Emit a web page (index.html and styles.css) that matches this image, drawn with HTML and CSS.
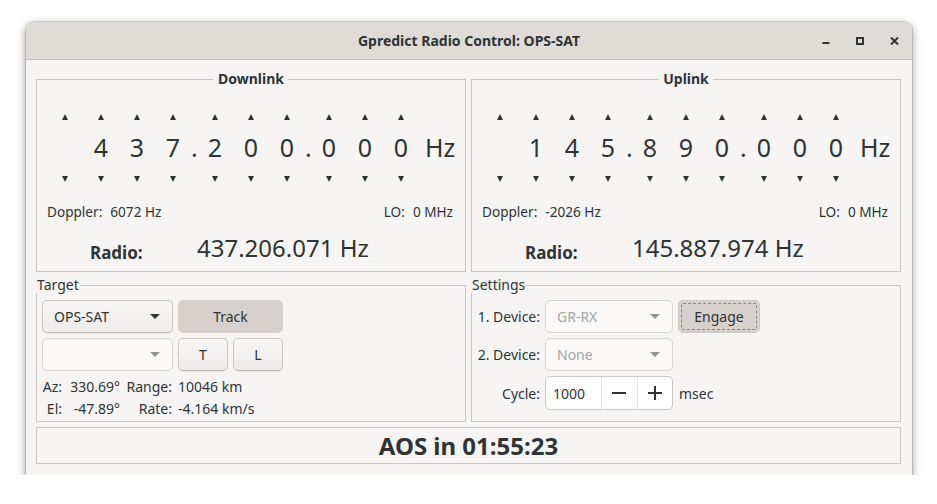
FILE: index.html
```html
<!DOCTYPE html>
<html>
<head>
<meta charset="utf-8">
<title>Gpredict Radio Control: OPS-SAT</title>
<link rel="stylesheet" href="styles.css">
</head>
<body>
<div class="window">
  <div class="titlebar">
    <div class="title">Gpredict Radio Control: OPS-SAT</div>
    <div class="wctl">
      <span class="wbtn"><svg width="8" height="8" viewBox="0 0 8 8"><rect x="0.5" y="5" width="7" height="2" fill="#2e3436"/></svg></span>
      <span class="wbtn"><svg width="8" height="8" viewBox="0 0 8 8"><rect x="1" y="1" width="6" height="6" fill="none" stroke="#2e3436" stroke-width="2"/></svg></span>
      <span class="wbtn"><svg width="9" height="8" viewBox="0 0 9 8"><path d="M1 0.5 L8 7.5 M8 0.5 L1 7.5" stroke="#2e3436" stroke-width="2"/></svg></span>
    </div>
  </div>
  <div class="content">
    <fieldset class="frame">
      <legend class="center">Downlink</legend>
      <div class="tuner">
        <div class="cell"><i class="up"></i><span class="d"></span><i class="down"></i></div>
        <div class="cell"><i class="up"></i><span class="d">4</span><i class="down"></i></div>
        <div class="cell"><i class="up"></i><span class="d">3</span><i class="down"></i></div>
        <div class="cell"><i class="up"></i><span class="d">7</span><i class="down"></i></div>
        <div class="dot">.</div>
        <div class="cell"><i class="up"></i><span class="d">2</span><i class="down"></i></div>
        <div class="cell"><i class="up"></i><span class="d">0</span><i class="down"></i></div>
        <div class="cell"><i class="up"></i><span class="d">0</span><i class="down"></i></div>
        <div class="dot">.</div>
        <div class="cell"><i class="up"></i><span class="d">0</span><i class="down"></i></div>
        <div class="cell"><i class="up"></i><span class="d">0</span><i class="down"></i></div>
        <div class="cell"><i class="up"></i><span class="d">0</span><i class="down"></i></div>
        <div class="unit">Hz</div>
      </div>
      <div class="doppler">
        <div><span class="lbl">Doppler:</span><span>6072 Hz</span></div>
        <div><span class="lbl">LO:</span><span>0 MHz</span></div>
      </div>
      <div class="radio"><span class="rlbl">Radio:</span><span class="rval">437.206.071 Hz</span></div>
    </fieldset>
    <fieldset class="frame">
      <legend class="center">Uplink</legend>
      <div class="tuner">
        <div class="cell"><i class="up"></i><span class="d"></span><i class="down"></i></div>
        <div class="cell"><i class="up"></i><span class="d">1</span><i class="down"></i></div>
        <div class="cell"><i class="up"></i><span class="d">4</span><i class="down"></i></div>
        <div class="cell"><i class="up"></i><span class="d">5</span><i class="down"></i></div>
        <div class="dot">.</div>
        <div class="cell"><i class="up"></i><span class="d">8</span><i class="down"></i></div>
        <div class="cell"><i class="up"></i><span class="d">9</span><i class="down"></i></div>
        <div class="cell"><i class="up"></i><span class="d">0</span><i class="down"></i></div>
        <div class="dot">.</div>
        <div class="cell"><i class="up"></i><span class="d">0</span><i class="down"></i></div>
        <div class="cell"><i class="up"></i><span class="d">0</span><i class="down"></i></div>
        <div class="cell"><i class="up"></i><span class="d">0</span><i class="down"></i></div>
        <div class="unit">Hz</div>
      </div>
      <div class="doppler">
        <div><span class="lbl">Doppler:</span><span>-2026 Hz</span></div>
        <div><span class="lbl">LO:</span><span>0 MHz</span></div>
      </div>
      <div class="radio"><span class="rlbl">Radio:</span><span class="rval">145.887.974 Hz</span></div>
    </fieldset>

    <fieldset class="frame">
      <legend class="left">Target</legend>
      <div class="target">
        <div class="combo"><span>OPS-SAT</span><i class="arr"></i></div>
        <div class="btn checked span2">Track</div>
        <div class="combo insens"><span></span><i class="arr"></i></div>
        <div class="btn">T</div>
        <div class="btn">L</div>
      </div>
      <div class="info">
        <span class="r">Az:</span><span class="r">330.69°</span><span class="r">Range:</span><span>10046 km</span>
        <span class="r">El:</span><span class="r">-47.89°</span><span class="r">Rate:</span><span>-4.164 km/s</span>
      </div>
    </fieldset>
    <fieldset class="frame">
      <legend class="left">Settings</legend>
      <div class="settings">
        <span class="slbl">1. Device:</span>
        <div class="combo insens"><span>GR-RX</span><i class="arr"></i></div>
        <div class="btn checked focus">Engage</div>
        <span class="slbl">2. Device:</span>
        <div class="combo insens"><span>None</span><i class="arr"></i></div>
        <span></span>
        <span class="slbl">Cycle:</span>
        <div class="spin">
          <span class="entry">1000</span>
          <span class="sb"><svg width="16" height="16" viewBox="0 0 16 16"><path d="M1 8 H15" stroke="#2e3436" stroke-width="2"/></svg></span>
          <span class="sb"><svg width="16" height="16" viewBox="0 0 16 16"><path d="M1 8 H15 M8 1 V15" stroke="#2e3436" stroke-width="2"/></svg></span>
        </div>
        <span class="msec">msec</span>
      </div>
    </fieldset>
    <div class="aos">AOS in 01:55:23</div>
  </div>
</div>
</body>
</html>
```

FILE: styles.css
```css
* { box-sizing: border-box; }
html, body { margin: 0; background: #ffffff; }
body {
  font-family: "Noto Sans", "Open Sans", sans-serif;
  color: #2e3436;
}
.window {
  margin: 22px 0 0 26px;
  width: 886px;
  height: 453px;
  background: #f6f5f4;
  border-radius: 8px 8px 0 0;
  box-shadow: 0 3px 9px 1px rgba(0,0,0,0.35), 0 0 0 1px rgba(0,0,0,0.12);
  display: flex;
  flex-direction: column;
  overflow: hidden;
}
.titlebar {
  flex: none;
  height: 38px;
  background: #dfdcd8;
  border-bottom: 1px solid #c4c0bb;
  display: grid;
  grid-template-columns: 1fr auto 1fr;
  align-items: center;
}
.title {
  grid-column: 2;
  font-size: 14px;
  font-weight: 700;
}
.wctl {
  grid-column: 3;
  justify-self: end;
  display: flex;
  padding-right: 1px;
}
.wbtn {
  width: 34px;
  height: 24px;
  display: flex;
  align-items: center;
  justify-content: center;
}
.wbtn svg { display: block; }
.content {
  flex: 1;
  padding: 11px 11px 10px 10px;
  display: grid;
  grid-template-columns: 430px 430px;
  grid-template-rows: 201px 145px 37px;
  column-gap: 5px;
  row-gap: 5px;
}
.frame {
  margin: 0;
  padding: 0;
  min-width: 0;
  border: 1px solid #cdc7c2;
}
.frame legend {
  font-size: 14px;
  line-height: 16px;
  padding: 0 3px;
}
.frame legend.center {
  font-weight: 700;
  margin: 0 auto;
  padding: 0 4px;
}
.frame legend.left {
  margin-left: -1px;
  padding: 0 1px 0 1px;
}
/* tuner */
.tuner {
  display: flex;
  padding: 27px 0 0 10px;
}
.cell {
  width: 36px;
  display: flex;
  flex-direction: column;
  align-items: center;
}
.up, .down {
  display: block;
  width: 0;
  height: 0;
  border-left: 3.5px solid transparent;
  border-right: 3.5px solid transparent;
}
.up { border-bottom: 6px solid #2e3436; margin-bottom: 10px; }
.down { border-top: 6px solid #2e3436; margin-top: 12px; }
.d, .dot, .unit {
  font-size: 25px;
  line-height: 34px;
  height: 34px;
}
.dot {
  width: 6px;
  margin-top: 16px;
  text-align: center;
}
.unit {
  margin: 16px 0 0 6px;
}
.doppler {
  display: flex;
  justify-content: space-between;
  font-size: 13.6px;
  line-height: 18px;
  margin-top: 21px;
  padding: 0 12px 0 10px;
}
.doppler .lbl { margin-right: 8px; }
.radio {
  display: flex;
  align-items: baseline;
  margin-top: 11px;
  padding-left: 53px;
}
.rlbl {
  width: 107px;
  font-size: 17px;
  font-weight: 700;
  position: relative;
  top: 2px;
}
.rval {
  font-size: 24px;
  line-height: 32px;
}
/* widgets */
.target {
  display: grid;
  grid-template-columns: 131px 50px 50px;
  grid-auto-rows: 33px;
  gap: 5px;
  padding: 7px 0 0 5px;
}
.span2 { grid-column: span 2; }
.combo {
  border: 1px solid #cdc7c2;
  border-bottom-color: #bfb8b1;
  border-radius: 5px;
  background: linear-gradient(#f8f7f6, #edebe9);
  box-shadow: 0 1px 1px rgba(0,0,0,0.05);
  display: flex;
  align-items: center;
  justify-content: space-between;
  padding: 0 12px 0 11px;
  font-size: 14px;
}
.arr {
  display: block;
  width: 0;
  height: 0;
  border-left: 5px solid transparent;
  border-right: 5px solid transparent;
  border-top: 5px solid #2e3436;
}
.combo.insens {
  background: #faf9f8;
  border-color: #d9d5d1;
  box-shadow: none;
  color: #a2a5a6;
}
.combo.insens .arr { border-top-color: #929595; }
.btn {
  border: 1px solid #cdc7c2;
  border-bottom-color: #bfb8b1;
  border-radius: 5px;
  background: linear-gradient(#f8f7f6, #edebe9);
  box-shadow: 0 1px 1px rgba(0,0,0,0.05);
  display: flex;
  align-items: center;
  justify-content: center;
  font-size: 14px;
}
.btn.checked {
  background: #d6d1cd;
  border-color: #d6d1cd;
  box-shadow: none;
}
.btn.focus {
  border-color: #cdc7c2;
  outline: 1px dashed rgba(46,52,54,0.45);
  outline-offset: -4px;
}
.info {
  display: grid;
  grid-template-columns: 20px 52px 46px auto;
  column-gap: 6px;
  font-size: 14px;
  line-height: 22px;
  margin-top: 5px;
  padding-left: 5px;
}
.info .r { text-align: right; }
.settings {
  display: grid;
  grid-template-columns: 63px 128px 82px;
  grid-template-rows: 33px 33px 34px;
  column-gap: 5px;
  row-gap: 5px;
  padding: 7px 0 0 5px;
  align-items: stretch;
  font-size: 14px;
}
.slbl {
  display: flex;
  align-items: center;
  justify-content: flex-end;
  white-space: nowrap;
}
.spin {
  display: flex;
  background: #ffffff;
  border: 1px solid #cdc7c2;
  border-radius: 5px;
}
.entry {
  width: 56px;
  display: flex;
  align-items: center;
  padding-left: 7px;
  border-right: 1px solid #e4e1de;
}
.sb {
  flex: 1;
  display: flex;
  align-items: center;
  justify-content: center;
}
.sb + .sb { border-left: 1px solid #e4e1de; }
.msec {
  display: flex;
  align-items: center;
  padding-left: 1px;
}
.aos {
  grid-column: 1 / -1;
  border: 1px solid #cdc7c2;
  display: flex;
  align-items: center;
  justify-content: center;
  font-size: 24px;
  font-weight: 700;
}
```
